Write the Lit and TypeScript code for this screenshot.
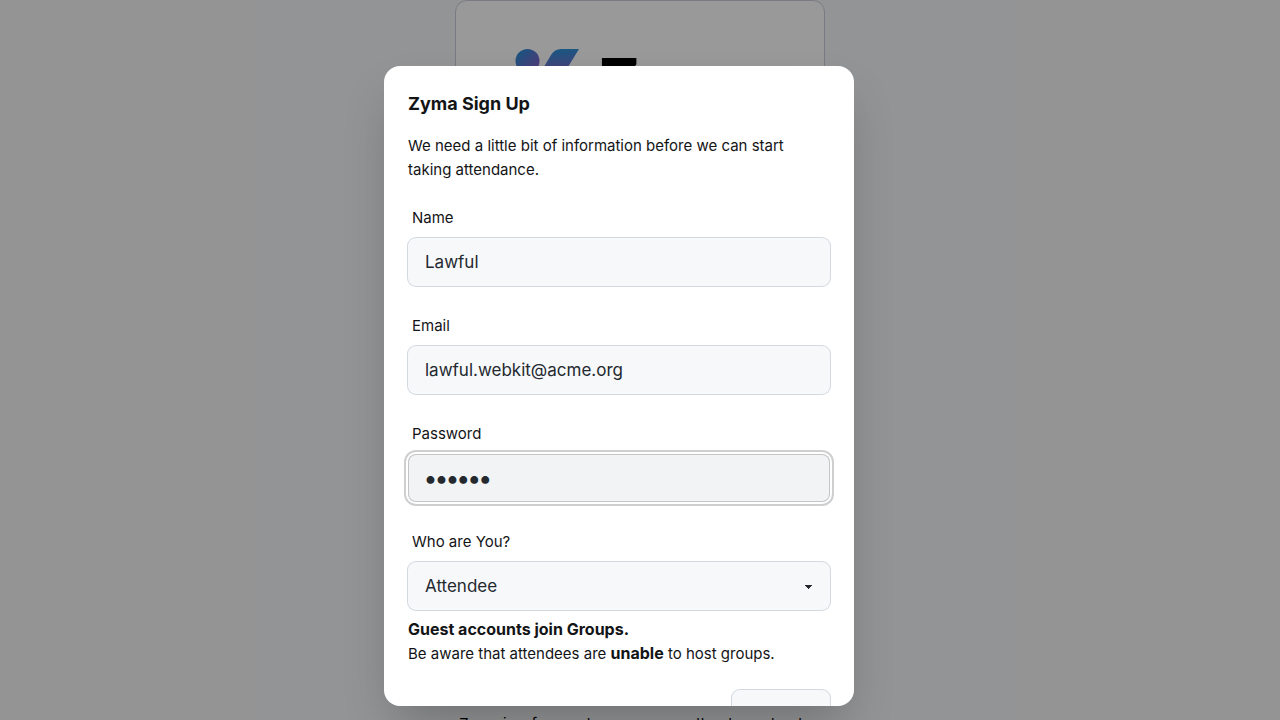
import { LitElement, html, css } from "lit";
import { customElement } from "lit/decorators.js";

@customElement("app-root")
class AppRoot extends LitElement {
  static styles = css`
    :host {
      display: block;
      height: 100vh;
      overflow: hidden;
      position: relative;
      background: #f6f7f9;
      color: #131416;
      font: 15px/24px Inter, sans-serif;
    }
    * { box-sizing: border-box; }
    p, h1, h2 { margin: 0; }
    strong { font-size: 16px; line-height: 20px; }

    .page { display: flex; flex-direction: column; align-items: center; gap: 12px; }
    .card {
      width: min(100%, 370px);
      min-height: 700px;
      border: 1px solid #c8ced8;
      border-radius: 12px;
      background: #fff;
      padding: 48px 59px;
    }
    .brand { display: flex; align-items: flex-start; gap: 20px; }
    .brand svg { flex: none; }
    .wordmark { font-size: 58px; line-height: 60px; font-weight: 900; color: #000; }
    .tagline { white-space: nowrap; color: #000; }

    .overlay {
      position: absolute;
      inset: 0;
      display: flex;
      justify-content: center;
      align-items: flex-start;
      padding-top: 66px;
      background: rgba(0, 0, 0, 0.4);
    }
    .frame { width: 100%; max-width: 512px; }
    .dialog {
      width: 91.75%;
      max-height: calc(100vh - 80px);
      overflow-y: auto;
      scrollbar-width: none;
      padding: 24px;
      border-radius: 16px;
      background: #fff;
      box-shadow: 0 25px 50px -12px rgba(0, 0, 0, 0.25);
    }
    .title { font-size: 18px; line-height: 28px; font-weight: 700; margin-bottom: 16px; }
    .form { display: flex; flex-direction: column; gap: 28px; margin-top: 24px; }
    .field { display: flex; flex-direction: column; gap: 8px; }
    .label { padding-left: 4px; }
    .control {
      appearance: none;
      width: 100%;
      height: 48px;
      margin: 0;
      padding: 0 17px;
      border: 0;
      border-radius: 8px;
      background-color: #f6f8fa;
      box-shadow: 0 0 0 1px #d2d9e0;
      color: #24292f;
      font: 17px/24px Inter, sans-serif;
      outline: none;
    }
    .secret { font-size: 25px; font-weight: 800; }
    .focused {
      background-color: #f2f3f5;
      box-shadow: inset 0 0 0 1px #c4c5c7;
      outline: 2px solid #cfcfcf;
      outline-offset: 2px;
    }
    .select {
      background-image: linear-gradient(45deg, transparent 50%, currentColor 50%),
        linear-gradient(135deg, currentColor 50%, transparent 50%);
      background-position: calc(100% - 21px) 23px, calc(100% - 17px) 23px;
      background-size: 4px 4px;
      background-repeat: no-repeat;
    }
    .actions { display: flex; justify-content: flex-end; margin-top: 24px; }
    .button {
      min-width: 98px;
      height: 48px;
      padding: 0 16px;
      border: 0;
      border-radius: 8px;
      background: #f6f8fa;
      box-shadow: 0 0 0 1px #d2d9e0;
      color: #24292f;
      font: 600 14px/20px Inter, sans-serif;
    }
  `;

  render() {
    return html`
      <main class="page">
        <section class="card">
          <div class="brand">
            <svg width="64" height="52" viewBox="0 0 64 52" aria-hidden="true">
              <defs>
                <linearGradient id="dot" x1="0" y1="0" x2="1" y2="1">
                  <stop offset="0" stop-color="#1c93d6" />
                  <stop offset="1" stop-color="#9a5bc8" />
                </linearGradient>
                <linearGradient id="bar" x1="0.4" y1="0" x2="0.5" y2="1">
                  <stop offset="0" stop-color="#2696da" />
                  <stop offset="0.5" stop-color="#8564c8" />
                  <stop offset="1" stop-color="#b04fb8" />
                </linearGradient>
              </defs>
              <circle cx="12.500" cy="12" r="12" fill="url(#dot)" />
              <path d="M46 0H64L37 44Q32 52 24 52H0L29.500 17L36 6Q39.500 0 46 0Z" fill="url(#bar)" />
            </svg>
            <h1 class="wordmark">Zyma</h1>
          </div>
        </section>
        <p class="tagline">Zyma is a free and open source attendance tracker</p>
      </main>

      <div class="overlay">
        <div class="frame">
          <div class="dialog" role="dialog" aria-modal="true" aria-labelledby="title">
            <h2 class="title" id="title">Zyma Sign Up</h2>
            <p>We need a little bit of information before we can start taking attendance.</p>
            <form class="form">
              <div class="field">
                <label class="label" for="name">Name</label>
                <input class="control" id="name" type="text" value="Lawful" />
              </div>
              <div class="field">
                <label class="label" for="email">Email</label>
                <input class="control" id="email" type="email" value="lawful.webkit@acme.org" />
              </div>
              <div class="field">
                <label class="label" for="password">Password</label>
                <input class="control secret focused" id="password" type="password" value="secret" />
              </div>
              <div class="field">
                <label class="label" for="role">Who are You?</label>
                <select class="control select" id="role">
                  <option>Attendee</option>
                  <option>Host</option>
                </select>
                <div>
                  <p><strong>Guest accounts join Groups.</strong></p>
                  <p>Be aware that attendees are <strong>unable</strong> to host groups.</p>
                  <div class="actions"><button class="button" type="button">Sign Up</button></div>
                </div>
              </div>
            </form>
          </div>
        </div>
      </div>
    `;
  }
}
